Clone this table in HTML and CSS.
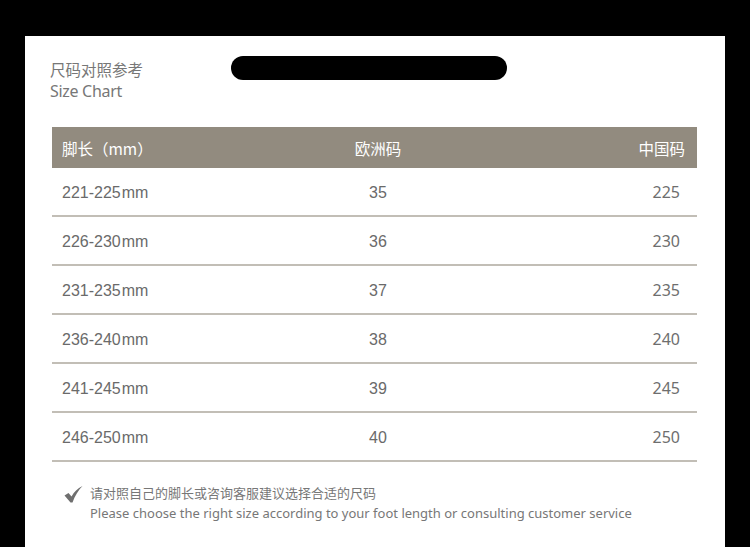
FILE: index.html
```html
<!DOCTYPE html>
<html lang="zh">
<head>
<meta charset="utf-8">
<link rel="stylesheet" href="styles.css">
</head>
<body>
<div class="sheet">
  <div class="head">
    <div class="title">
      <div class="title-cn">尺码对照参考</div>
      <div class="title-en">Size Chart</div>
    </div>
    <div class="pill"></div>
  </div>
  <div class="table">
    <div class="row thead">
      <div class="c1">脚长（mm）</div>
      <div class="c2">欧洲码</div>
      <div class="c3">中国码</div>
    </div>
    <div class="row"><div class="c1">221-225<span class="mm">mm</span></div><div class="c2">35</div><div class="c3">225</div></div>
    <div class="row"><div class="c1">226-230<span class="mm">mm</span></div><div class="c2">36</div><div class="c3">230</div></div>
    <div class="row"><div class="c1">231-235<span class="mm">mm</span></div><div class="c2">37</div><div class="c3">235</div></div>
    <div class="row"><div class="c1">236-240<span class="mm">mm</span></div><div class="c2">38</div><div class="c3">240</div></div>
    <div class="row"><div class="c1">241-245<span class="mm">mm</span></div><div class="c2">39</div><div class="c3">245</div></div>
    <div class="row"><div class="c1">246-250<span class="mm">mm</span></div><div class="c2">40</div><div class="c3">250</div></div>
  </div>
  <div class="note">
    <svg class="check" width="19" height="17" viewBox="0 0 19 17"><path d="M0.5 9.5 L4.5 7 L7.5 10.5 C10 6 13.5 2.5 18.5 0 C14.5 4 11 9.5 8.5 16.5 L6.5 16.5 Z" fill="#6f6f6f"/></svg>
    <div class="note-text">
      <div class="note-cn">请对照自己的脚长或咨询客服建议选择合适的尺码</div>
      <div class="note-en">Please choose the right size according to your foot length or consulting customer service</div>
    </div>
  </div>
</div>
</body>
</html>
```

FILE: styles.css
```css
html, body {
  margin: 0;
  padding: 0;
  background: #000;
}
body {
  width: 750px;
  height: 547px;
  overflow: hidden;
}
.sheet {
  margin: 36px 0 0 25px;
  width: 700px;
  height: 511px;
  background: #fff;
  font-family: "Noto Sans", "Noto Sans CJK SC", sans-serif;
  color: #6e6e6e;
}
.head {
  display: flex;
  align-items: flex-start;
  padding: 22px 0 0 25px;
  height: 69px;
}
.title {
  width: 181px;
}
.title-cn {
  font-family: "Noto Sans CJK SC", sans-serif;
  font-size: 15.5px;
  line-height: 22px;
  color: #777;
}
.title-en {
  font-size: 16px;
  line-height: 22px;
  color: #777;
  letter-spacing: -0.3px;
}
.pill {
  width: 276px;
  height: 24px;
  margin-top: -2px;
  border-radius: 12px;
  background: #000;
}
.table {
  margin-left: 27px;
  width: 645px;
}
.row {
  display: grid;
  grid-template-columns: 276px 100px 1fr;
  align-items: center;
  height: 47px;
  border-bottom: 2px solid #c2beb6;
  font-size: 16px;
}
.row .c1 {
  padding-left: 10px;
  padding-top: 2px;
  font-family: "Liberation Sans", "Noto Sans CJK SC", sans-serif;
  color: #6a6a6a;
}
.mm {
  margin-left: 1px;
}
.row .c2 {
  text-align: center;
  padding-top: 2px;
  font-family: "Liberation Sans", sans-serif;
  color: #6a6a6a;
}
.row .c3 {
  text-align: right;
  padding-right: 17px;
  padding-top: 1px;
  color: #6e6e6e;
}
.row.thead {
  height: 41px;
  border-bottom: none;
  background: #928b7f;
  color: #fff;
}
.row.thead .c1,
.row.thead .c2,
.row.thead .c3 {
  font-family: "Noto Sans CJK SC", sans-serif;
  color: #fff;
  font-size: 15.5px;
  padding-top: 0;
}
.row.thead .c3 {
  padding-right: 12px;
}
.note {
  display: flex;
  align-items: flex-start;
  padding: 20px 0 0 39px;
}
.check {
  margin-top: 4px;
  margin-right: 7px;
}
.note-cn {
  font-family: "Noto Sans CJK SC", sans-serif;
  font-size: 13px;
  line-height: 21px;
  color: #777;
}
.note-en {
  font-size: 13px;
  line-height: 20px;
  color: #777;
  letter-spacing: 0;
}
```
